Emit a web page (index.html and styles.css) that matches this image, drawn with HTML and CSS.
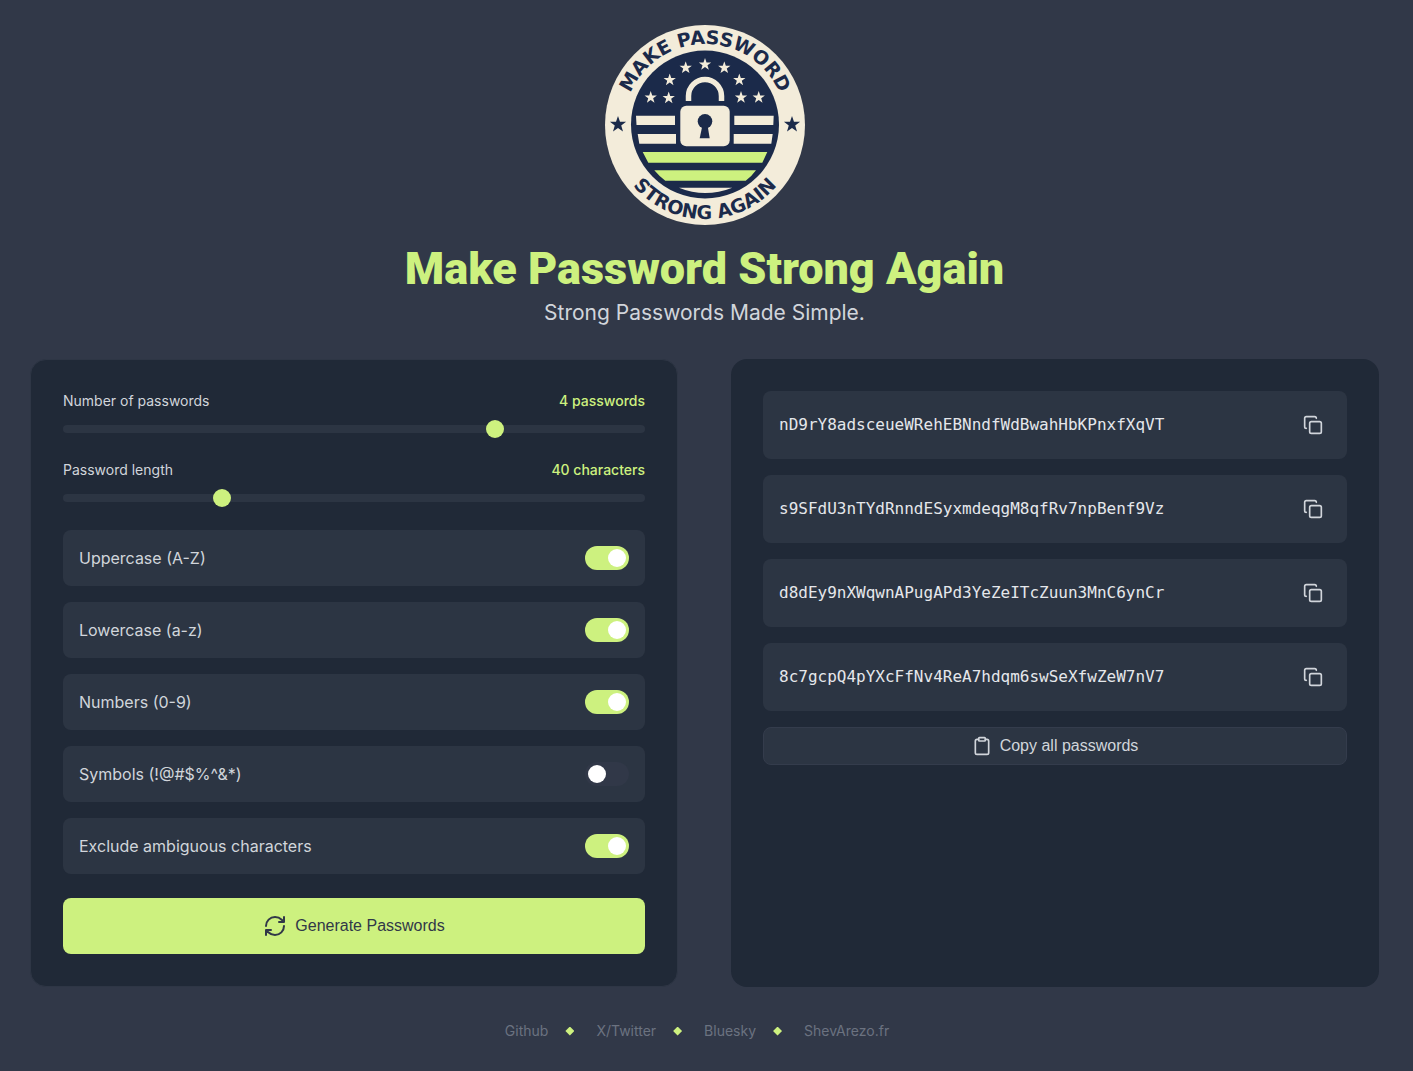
FILE: index.html
```html
<!DOCTYPE html>
<html lang="en">
<head>
<meta charset="utf-8">
<meta name="viewport" content="width=device-width, initial-scale=1">
<title>Make Password Strong Again</title>
<link rel="stylesheet" href="styles.css">
</head>
<body>
<svg class="sprite" aria-hidden="true">
  <symbol id="copy" viewBox="0 0 24 24"><rect x="8" y="8" width="14" height="14" rx="2"/><path d="M4 16c-1.1 0-2-.9-2-2V4c0-1.1.9-2 2-2h10c1.1 0 2 .9 2 2"/></symbol>
  <symbol id="clipboard" viewBox="0 0 24 24"><rect x="8" y="2" width="8" height="4" rx="1"/><path d="M16 4h2a2 2 0 0 1 2 2v14a2 2 0 0 1-2 2H6a2 2 0 0 1-2-2V6a2 2 0 0 1 2-2h2"/></symbol>
  <symbol id="refresh" viewBox="0 0 24 24"><path d="M3 12a9 9 0 0 1 9-9 9.750 9.750 0 0 1 6.740 2.740L21 8M21 3v5h-5M21 12a9 9 0 0 1-9 9 9.750 9.750 0 0 1-6.740-2.740L3 16M8 16H3v5"/></symbol>
  <symbol id="star" viewBox="-10 -10 20 20"><path d="M0-10 2.350-3.240 9.510-3.090 3.800 1.240 5.880 8.090 0 4 -5.880 8.090 -3.800 1.240 -9.510-3.090 -2.350-3.240Z"/></symbol>
</svg>
<div class="page">
  <header class="header">
    <svg class="logo" viewBox="0 0 200 200" role="img" aria-label="Make Password Strong Again logo">
      <defs>
        <path id="arc-top" d="M19 100a81 81 0 0 1 162 0"/>
        <path id="arc-bottom" d="M6 100a94 94 0 0 0 188 0"/>
      </defs>
      <circle class="cream" cx="100" cy="100" r="100"/>
      <circle class="navy" cx="100" cy="99.500" r="74"/>
      <g class="navy">
        <use href="#star" x="4.500" y="91" width="17" height="17"/>
        <use href="#star" x="178.500" y="91" width="17" height="17"/>
        <text class="logo-text"><textPath href="#arc-top" startOffset="50%">MAKE PASSWORD</textPath></text>
        <text class="logo-text"><textPath href="#arc-bottom" startOffset="50%">STRONG AGAIN</textPath></text>
      </g>
      <g class="cream">
        <use href="#star" x="93.500" y="33" width="13" height="13"/>
        <use href="#star" x="74.200" y="36.300" width="13" height="13"/>
        <use href="#star" x="112.800" y="36.300" width="13" height="13"/>
        <use href="#star" x="58.200" y="48.500" width="13" height="13"/>
        <use href="#star" x="127.800" y="48.500" width="13" height="13"/>
        <use href="#star" x="39.200" y="66" width="13" height="13"/>
        <use href="#star" x="57.200" y="66.500" width="13" height="13"/>
        <use href="#star" x="129.500" y="66" width="13" height="13"/>
        <use href="#star" x="147.200" y="66" width="13" height="13"/>
        <path d="M31 90.700H70V100H31.500ZM129.300 90.700H168.700L168.300 100H129.300ZM32.700 109H71V118.700H34.300ZM128.700 109H167.700L166.300 118.700H128.700Z"/>
        <path d="M74 162.700H127.300Q100 173.500 74 162.700Z"/>
        <rect x="75.300" y="80.700" width="49.400" height="40.600" rx="6"/>
      </g>
      <path class="lime" d="M37.700 127H162.300L157.300 137.700H43.300ZM49.300 145.300H151Q147 151 140.700 155.700H60.300Q54 151 49.300 145.300Z"/>
      <path class="shackle" d="M83.500 76V71a16.500 16.500 0 0 1 33 0V76"/>
      <g class="navy"><circle cx="100" cy="96.300" r="7.300"/><path d="M97.500 100H102.500L104.700 113.300H94.700Z"/></g>
    </svg>
    <h1 class="title">Make Password Strong Again</h1>
    <p class="subtitle">Strong Passwords Made Simple.</p>
  </header>
  <main class="panels">
    <form class="panel panel-settings">
      <div class="field">
        <div class="field-head"><label for="count">Number of passwords</label><output for="count">4 passwords</output></div>
        <input class="slider" type="range" id="count" min="1" max="5" value="4">
      </div>
      <div class="field">
        <div class="field-head"><label for="length">Password length</label><output for="length">40 characters</output></div>
        <input class="slider" type="range" id="length" min="8" max="128" value="40">
      </div>
      <div class="options">
        <label class="option">Uppercase (A-Z)<input class="toggle" type="checkbox" checked></label>
        <label class="option">Lowercase (a-z)<input class="toggle" type="checkbox" checked></label>
        <label class="option">Numbers (0-9)<input class="toggle" type="checkbox" checked></label>
        <label class="option">Symbols (!@#$%^&amp;*)<input class="toggle" type="checkbox"></label>
        <label class="option">Exclude ambiguous characters<input class="toggle" type="checkbox" checked></label>
      </div>
      <button class="generate" type="button"><svg class="icon icon-large"><use href="#refresh"/></svg>Generate Passwords</button>
    </form>
    <section class="panel panel-results">
      <div class="result"><code>nD9rY8adsceueWRehEBNndfWdBwahHbKPnxfXqVT</code><button class="copy" type="button" aria-label="Copy password"><svg class="icon"><use href="#copy"/></svg></button></div>
      <div class="result"><code>s9SFdU3nTYdRnndESyxmdeqgM8qfRv7npBenf9Vz</code><button class="copy" type="button" aria-label="Copy password"><svg class="icon"><use href="#copy"/></svg></button></div>
      <div class="result"><code>d8dEy9nXWqwnAPugAPd3YeZeITcZuun3MnC6ynCr</code><button class="copy" type="button" aria-label="Copy password"><svg class="icon"><use href="#copy"/></svg></button></div>
      <div class="result"><code>8c7gcpQ4pYXcFfNv4ReA7hdqm6swSeXfwZeW7nV7</code><button class="copy" type="button" aria-label="Copy password"><svg class="icon"><use href="#copy"/></svg></button></div>
      <button class="copy-all" type="button"><svg class="icon"><use href="#clipboard"/></svg>Copy all passwords</button>
    </section>
  </main>
  <footer>
    <ul class="links">
      <li><a href="#github">Github</a></li>
      <li><a href="#twitter">X/Twitter</a></li>
      <li><a href="#bluesky">Bluesky</a></li>
      <li><a href="#site">ShevArezo.fr</a></li>
    </ul>
  </footer>
</div>
</body>
</html>
```
FILE: styles.css
```css
:root {
  --bg: #313848;
  --panel: #202937;
  --surface: #2c3543;
  --lime: #cdf17f;
  --text: #d1d5db;
}
* { box-sizing: border-box; }
body {
  margin: 0;
  background: var(--bg);
  color: var(--text);
  font: 16px/24px Inter, sans-serif;
}
button, input { margin: 0; font: inherit; color: inherit; }
button { border: 0; cursor: pointer; }
.sprite { display: none; }
.page { padding: 25px 34px 28px 30px; }

.header { display: flex; flex-direction: column; align-items: center; }
.logo { width: 200px; height: 200px; }
.cream { fill: #f3ecda; }
.navy { fill: #1b2a4a; }
.lime { fill: var(--lime); }
.shackle { fill: none; stroke: #f3ecda; stroke-width: 5.500; }
.logo-text { font: 700 19px "DejaVu Sans", sans-serif; text-anchor: middle; }
.title {
  margin: 20px 0 0;
  color: var(--lime);
  font: 900 45px/48px Roboto, sans-serif;
}
.subtitle { margin: 6px 0 0; font-size: 21px; line-height: 28px; }

.panels {
  display: grid;
  grid-template-columns: 1fr 1fr;
  gap: 53px;
  margin-top: 32px;
}
.panel {
  display: flex;
  flex-direction: column;
  min-width: 0;
  padding: 32px;
  border-radius: 16px;
  background: var(--panel);
}
.panel-settings { gap: 28px; border: 1px solid #2e3645; }
.panel-results { gap: 16px; }

.field { display: flex; flex-direction: column; gap: 16px; }
.field-head {
  display: flex;
  justify-content: space-between;
  font-size: 14px;
  line-height: 17px;
}
.field-head output { color: var(--lime); font-weight: 500; }
.slider {
  appearance: none;
  width: 100%;
  height: 8px;
  border-radius: 4px;
  background: var(--surface);
}
.slider::-webkit-slider-thumb {
  appearance: none;
  width: 18px;
  height: 18px;
  border-radius: 50%;
  background: var(--lime);
}
.options { display: flex; flex-direction: column; gap: 16px; }
.option {
  display: flex;
  align-items: center;
  justify-content: space-between;
  padding: 16px;
  border-radius: 8px;
  background: var(--surface);
}
.toggle {
  appearance: none;
  display: flex;
  align-items: center;
  width: 44px;
  height: 24px;
  padding: 3px;
  border-radius: 12px;
  background: var(--bg);
}
.toggle::before {
  content: "";
  width: 18px;
  height: 18px;
  border-radius: 50%;
  background: #fff;
}
.toggle:checked { justify-content: flex-end; background: var(--lime); }

.icon {
  width: 20px;
  height: 20px;
  fill: none;
  stroke: currentColor;
  stroke-width: 2;
  stroke-linecap: round;
  stroke-linejoin: round;
}
.icon-large { width: 24px; height: 24px; }
.generate, .copy-all {
  display: flex;
  align-items: center;
  justify-content: center;
  gap: 8px;
  border-radius: 8px;
  font: 16px/20px "Liberation Sans", Arial, sans-serif;
}
.generate {
  margin-top: -4px;
  padding: 16px;
  background: var(--lime);
  color: #313848;
}
.result {
  display: flex;
  align-items: center;
  justify-content: space-between;
  padding: 16px;
  border-radius: 8px;
  background: var(--surface);
}
.result code {
  color: #e5e7eb;
  font: 16px/24px "DejaVu Sans Mono", monospace;
}
.copy { display: flex; padding: 8px; background: none; }
.copy-all {
  padding: 8px;
  border: 1px solid #343c4c;
  background: var(--surface);
}

.links {
  display: flex;
  justify-content: center;
  margin: 34px 0 0;
  padding: 0 15px 0 0;
  list-style: none;
  font-size: 14px;
  line-height: 20px;
}
.links li { display: flex; align-items: center; }
.links li:not(:last-child)::after {
  content: "";
  width: 9px;
  height: 9px;
  margin: 0 22px 0 17px;
  background: var(--lime);
  clip-path: polygon(50% 0, 100% 50%, 50% 100%, 0 50%);
}
.links a { color: #6b7280; text-decoration: none; }

@media (max-width: 800px) {
  .panels { grid-template-columns: 1fr; }
  .result code { overflow-wrap: anywhere; }
}
```
